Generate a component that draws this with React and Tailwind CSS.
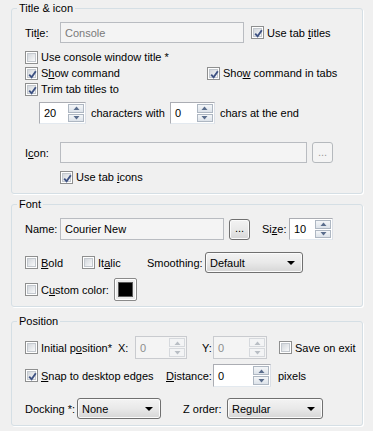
import React from "react";

const Box = ({ checked }) => (
  <span className="relative flex items-center justify-center w-[13px] h-[13px] border border-[#8e8f8f] bg-white shrink-0">
    <span className="w-[9px] h-[9px] border border-[#c3c8ce] bg-gradient-to-br from-[#d3d7dc] to-[#f8f9fa]" />
    {checked && (
      <svg className="absolute left-[1px] top-[1px]" width="11" height="11" viewBox="0 0 11 11">
        <path d="M2.2 5.6 L4.6 8.3 L8.8 2.2" fill="none" stroke="#3e5283" strokeWidth="1.9" />
      </svg>
    )}
  </span>
);

const Check = ({ checked, children, className = "" }) => (
  <span className={`flex items-center h-[16px] ${className}`}>
    <Box checked={checked} />
    <span className="ml-[3px] whitespace-nowrap">{children}</span>
  </span>
);

const Arrow = ({ up, disabled }) => (
  <svg width="7" height="4" viewBox="0 0 7 4">
    <path d={up ? "M0.5 4 L3.5 0.5 L6.5 4 Z" : "M0.5 0 L3.5 3.5 L6.5 0 Z"} fill={disabled ? "#b9bec4" : "#5a6d8c"} />
  </svg>
);

const Spin = ({ value, className = "", disabled }) => (
  <div
    className={`flex items-stretch border ${
      disabled ? "border-[#c9cbcf] bg-[#f4f4f4] text-[#8d8d8d]" : "border-[#abadb3] border-r-[#dbdfe6] border-b-[#e3e9ef] bg-white"
    } ${className}`}
  >
    <span className="flex-1 flex items-center pl-[4px]">{value}</span>
    <div className="flex flex-col w-[17px] gap-[1px] py-[1px] pr-[1px]">
      <span className={`flex-1 flex items-center justify-center border ${disabled ? "border-[#d6d9dd] bg-[#f3f4f5]" : "border-[#aeb7c2] bg-gradient-to-b from-[#f4f6f8] to-[#dde3ea]"}`}>
        <Arrow up disabled={disabled} />
      </span>
      <span className={`flex-1 flex items-center justify-center border ${disabled ? "border-[#d6d9dd] bg-[#f3f4f5]" : "border-[#aeb7c2] bg-gradient-to-b from-[#f4f6f8] to-[#dde3ea]"}`}>
        <Arrow disabled={disabled} />
      </span>
    </div>
  </div>
);

const Field = ({ value, className = "", muted }) => (
  <div className={`flex items-center pl-[4px] border border-[#b9bcc1] bg-[#f4f4f4] ${muted ? "text-[#7a7a7a]" : ""} ${className}`}>
    {value}
  </div>
);

const Combo = ({ value, className = "" }) => (
  <div
    className={`flex items-center justify-between rounded-[3px] border border-[#707070] bg-gradient-to-b from-[#f3f3f3] via-[#e9e9e9] to-[#d6d6d6] pl-[4px] pr-[7px] shadow-[inset_0_0_0_1px_#fbfbfb] ${className}`}
  >
    <span>{value}</span>
    <svg width="8" height="4" viewBox="0 0 8 4">
      <path d="M0 0 H8 L4 4 Z" fill="#000" />
    </svg>
  </div>
);

const Dots = ({ disabled, className = "" }) => (
  <div
    className={`flex items-center justify-center rounded-[3px] border w-[21px] h-[21px] pb-[2px] ${
      disabled
        ? "border-[#b5b9bd] bg-[#f4f4f4] text-[#9a9a9a]"
        : "border-[#707070] bg-gradient-to-b from-[#f3f3f3] via-[#e9e9e9] to-[#d6d6d6] shadow-[inset_0_0_0_1px_#fbfbfb]"
    } ${className}`}
  >
    ...
  </div>
);

const Group = ({ title, className = "", children }) => (
  <fieldset className={`border border-[#d5dfe5] rounded-[3px] shadow-[1px_1px_0_#ffffff] ${className}`}>
    <legend className="ml-[5px] px-[2px] leading-[14px]">{title}</legend>
    <div className="pl-[13px]">{children}</div>
  </fieldset>
);

export default function App() {
  return (
    <div
      className="w-[373px] h-[431px] bg-[#f0f0f0] text-black text-[11px] leading-[14px] pl-[11px] pt-[1px] overflow-hidden"
      style={{ fontFamily: '"Liberation Sans", Arial, sans-serif' }}
    >
      <Group title="Title & icon" className="w-[352px] pb-[8px]">
        <div className="flex items-center mt-[7px] h-[21px]">
          <span className="w-[35px]">
            Tit<u>l</u>e:
          </span>
          <Field value="Console" muted className="w-[184px] h-[21px]" />
          <Check checked className="ml-[7px]">
            Use tab <u>t</u>itles
          </Check>
        </div>
        <div className="mt-[6px]">
          <Check>Use console window title *</Check>
        </div>
        <div className="flex">
          <span className="w-[182px]">
            <Check checked>
              S<u>h</u>ow command
            </Check>
          </span>
          <Check checked>
            Sho<u>w</u> command in tabs
          </Check>
        </div>
        <Check checked>Trim tab titles to</Check>
        <div className="flex items-center mt-[5px] ml-[14px]">
          <Spin value="20" className="w-[47px] h-[22px]" />
          <span className="ml-[5px]">characters with</span>
          <Spin value="0" className="ml-[5px] w-[45px] h-[22px]" />
          <span className="ml-[5px]">chars at the end</span>
        </div>
        <div className="flex items-center mt-[18px] h-[21px]">
          <span className="w-[35px]">
            I<u>c</u>on:
          </span>
          <Field value="" className="w-[247px] h-[21px]" />
          <Dots disabled className="ml-[5px]" />
        </div>
        <div className="mt-[6px] ml-[35px]">
          <Check checked>
            Use tab <u>i</u>cons
          </Check>
        </div>
      </Group>

      <Group title="Font" className="w-[352px] mt-[3px] pb-[5px]">
        <div className="flex items-center mt-[7px] h-[22px]">
          <span className="w-[35px]">Name:</span>
          <Field value="Courier New" className="w-[164px] h-[22px]" />
          <Dots className="ml-[5px]" />
          <span className="ml-[12px] w-[27px]">
            Si<u>z</u>e:
          </span>
          <Spin value="10" className="w-[44px] h-[22px]" />
        </div>
        <div className="flex items-center mt-[12px] h-[21px]">
          <span className="w-[57px]">
            <Check>
              <u>B</u>old
            </Check>
          </span>
          <span className="w-[65px]">
            <Check>
              It<u>a</u>lic
            </Check>
          </span>
          <span className="w-[58px]">Smoothing:</span>
          <Combo value="Default" className="w-[98px] h-[21px]" />
        </div>
        <div className="flex items-center mt-[5px] h-[23px]">
          <span className="w-[89px]">
            <Check>
              C<u>u</u>stom color:
            </Check>
          </span>
          <div className="w-[23px] h-[23px] rounded-[2px] border border-[#8a8a8a] bg-[#ececec] p-[3px] shadow-[inset_0_0_0_1px_#ffffff]">
            <div className="w-full h-full bg-black border border-[#5a5a5a]" />
          </div>
        </div>
      </Group>

      <Group title="Position" className="w-[352px] mt-[7px] pb-[6px]">
        <div className="flex items-center mt-[8px] h-[23px]">
          <span className="w-[93px]">
            <Check>
              Initial p<u>o</u>sition*
            </Check>
          </span>
          <span className="w-[17px]">X:</span>
          <Spin value="0" disabled className="w-[52px] h-[23px]" />
          <span className="ml-[15px] w-[11px]">Y:</span>
          <Spin value="0" disabled className="w-[54px] h-[23px]" />
          <Check className="ml-[12px]">Save on exit</Check>
        </div>
        <div className="flex items-center mt-[5px] h-[23px]">
          <span className="w-[141px]">
            <Check checked>
              <u>S</u>nap to desktop edges
            </Check>
          </span>
          <span className="w-[47px]">
            <u>D</u>istance:
          </span>
          <Spin value="0" className="w-[58px] h-[23px]" />
          <span className="ml-[7px]">pixels</span>
        </div>
        <div className="flex items-center mt-[11px] h-[21px]">
          <span className="w-[52px]">Docking *:</span>
          <Combo value="None" className="w-[84px] h-[21px]" />
          <span className="ml-[22px] w-[44px]">Z order:</span>
          <Combo value="Regular" className="w-[96px] h-[21px]" />
        </div>
      </Group>
    </div>
  );
}
